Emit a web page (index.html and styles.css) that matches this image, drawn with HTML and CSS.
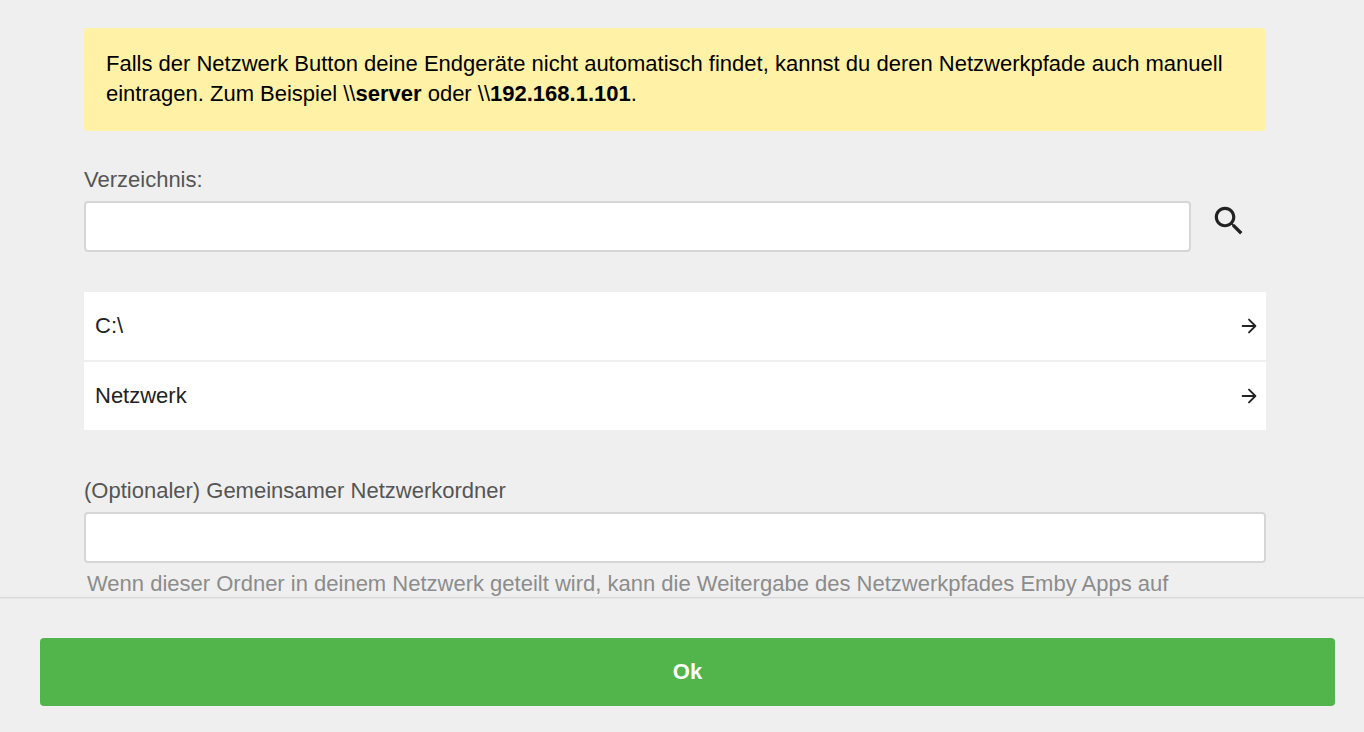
FILE: index.html
```html
<!DOCTYPE html>
<html lang="de">
<head>
    <meta charset="UTF-8">
    <meta name="viewport" content="width=device-width, initial-scale=1.0">
    <title>Verzeichnis auswählen</title>
    <link rel="stylesheet" href="styles.css">
</head>
<body>
    <form class="dialog">
        <div class="dialog-content">
            <div class="info-banner">
                Falls der Netzwerk Button deine Endgeräte nicht automatisch findet, kannst du deren Netzwerkpfade auch manuell eintragen. Zum Beispiel \\<b>server</b> oder \\<b>192.168.1.101</b>.
            </div>

            <div class="field">
                <label for="path">Verzeichnis:</label>
                <div class="field-row">
                    <input type="text" id="path">
                    <button type="button" class="search-button" aria-label="Suchen">
                        <svg viewBox="0 0 24 24"><path d="M15.5 14h-.79l-.28-.27C15.41 12.59 16 11.11 16 9.5 16 5.91 13.09 3 9.5 3S3 5.91 3 9.5 5.91 16 9.5 16c1.61 0 3.09-.59 4.23-1.57l.27.28v.79l5 4.99L20.49 19l-4.99-5zm-6 0C7.01 14 5 11.99 5 9.5S7.01 5 9.5 5 14 7.01 14 9.5 11.99 14 9.5 14z"/></svg>
                    </button>
                </div>
            </div>

            <div class="folder-list">
                <button type="button" class="folder">
                    <span>C:\</span>
                    <svg viewBox="0 0 24 24"><path d="M5 12h14M12 5l7 7-7 7"/></svg>
                </button>
                <button type="button" class="folder">
                    <span>Netzwerk</span>
                    <svg viewBox="0 0 24 24"><path d="M5 12h14M12 5l7 7-7 7"/></svg>
                </button>
            </div>

            <div class="field">
                <label for="network-path">(Optionaler) Gemeinsamer Netzwerkordner</label>
                <input type="text" id="network-path">
                <div class="field-description">Wenn dieser Ordner in deinem Netzwerk geteilt wird, kann die Weitergabe des Netzwerkpfades Emby Apps auf</div>
            </div>
        </div>

        <div class="dialog-footer">
            <button type="submit" class="submit-button">Ok</button>
        </div>
    </form>
</body>
</html>
```
FILE: styles.css
```css
* {
    box-sizing: border-box;
}
body {
    margin: 0;
    background-color: #efefef;
    font-family: "Liberation Sans", Arial, sans-serif;
    font-size: 22px;
    line-height: 30px;
    color: #222;
}
button,
input {
    font: inherit;
    color: inherit;
}
button {
    border: none;
    cursor: pointer;
}
.dialog {
    display: flex;
    flex-direction: column;
    height: 100vh;
}
.dialog-content {
    flex: 1;
    min-height: 0;
    overflow: hidden;
    padding: 28px 98px 0 84px;
}
.info-banner {
    margin-bottom: 34px;
    padding: 21px 22px 22px;
    background-color: #fff2a6;
    border-radius: 4px;
    color: #000;
}
.field label {
    display: block;
    margin-bottom: 6px;
    color: #555;
}
.field-row {
    display: flex;
    align-items: flex-start;
}
.field input {
    display: block;
    width: 100%;
    height: 51px;
    padding: 0 10px;
    background-color: #fff;
    border: 2px solid #d6d6d6;
    border-radius: 4px;
}
.search-button {
    display: flex;
    flex: none;
    align-items: center;
    justify-content: center;
    width: 75px;
    height: 40px;
    padding: 0;
    background: none;
}
.search-button svg {
    width: 38px;
    height: 38px;
    fill: #222;
}
.folder-list {
    display: flex;
    flex-direction: column;
    gap: 2px;
    margin: 40px 0 46px;
}
.folder {
    display: flex;
    align-items: center;
    justify-content: space-between;
    height: 68px;
    padding: 0 6px 0 11px;
    background-color: #fff;
    text-align: left;
}
.folder svg {
    width: 22px;
    height: 22px;
    fill: none;
    stroke: #222;
    stroke-width: 2;
    stroke-linecap: round;
    stroke-linejoin: round;
}
.field-description {
    margin-top: 6px;
    padding-left: 3px;
    color: #8c8c8c;
}
.dialog-footer {
    padding: 40px 29px 26px 40px;
    border-top: 1px solid #d9d9d9;
    box-shadow: inset 0 1px 0 #e6e6e6;
}
.submit-button {
    display: block;
    width: 100%;
    height: 68px;
    background-color: #52b54b;
    border-radius: 4px;
    color: #fff;
    font-weight: bold;
}
```
